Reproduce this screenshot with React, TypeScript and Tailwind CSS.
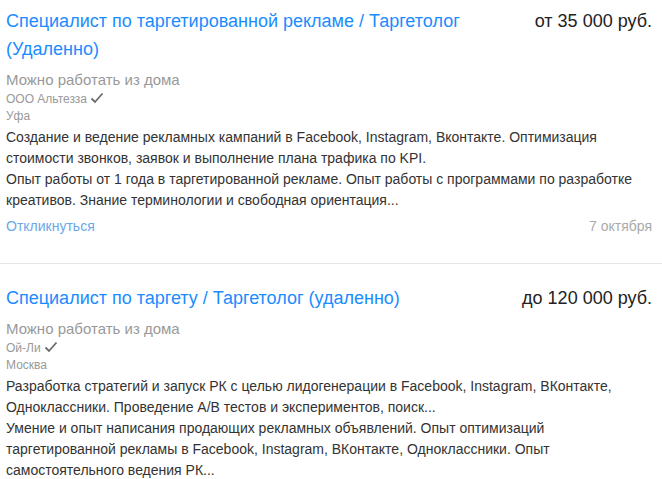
import React from "react";

function Check() {
  return (
    <svg width="14" height="12" viewBox="0 0 14 12" className="inline-block ml-[3px] align-[-1px]">
      <path d="M1.5 6.5 L5 10 L12.5 1.5" fill="none" stroke="#6b6b6b" strokeWidth="1.8" />
    </svg>
  );
}

type Vac = {
  title: string;
  salary: string;
  company: string;
  city: string;
  body: string[];
  footer?: boolean;
};

const vacs: Vac[] = [
  {
    title: "Специалист по таргетированной рекламе / Таргетолог (Удаленно)",
    salary: "от 35 000 руб.",
    company: "ООО Альтезза",
    city: "Уфа",
    body: [
      "Создание и ведение рекламных кампаний в Facebook, Instagram, Вконтакте. Оптимизация стоимости звонков, заявок и выполнение плана трафика по KPI.",
      "Опыт работы от 1 года в таргетированной рекламе. Опыт работы с программами по разработке креативов. Знание терминологии и свободная ориентация...",
    ],
    footer: true,
  },
  {
    title: "Специалист по таргету / Таргетолог (удаленно)",
    salary: "до 120 000 руб.",
    company: "Ой-Ли",
    city: "Москва",
    body: [
      "Разработка стратегий и запуск РК с целью лидогенерации в Facebook, Instagram, ВКонтакте, Одноклассники. Проведение A/B тестов и экспериментов, поиск...",
      "Умение и опыт написания продающих рекламных объявлений. Опыт оптимизаций таргетированной рекламы в Facebook, Instagram, ВКонтакте, Одноклассники. Опыт самостоятельного ведения РК...",
    ],
  },
];

function Card({ v }: { v: Vac }) {
  return (
    <div className="pl-[6px] pr-[10px]">
      <div className="flex justify-between items-start">
        <div className="text-[18px] leading-[28px] text-[#1a8cff] w-[480px]">{v.title}</div>
        <div className="text-[18px] leading-[28px] text-[#222] whitespace-nowrap">{v.salary}</div>
      </div>
      <div className="mt-[8px] text-[15px] leading-[18px] text-[#999]">Можно работать из дома</div>
      <div className="mt-[1px] text-[12px] leading-[18px] text-[#999]">
        {v.company}
        <Check />
      </div>
      <div className="text-[12px] leading-[17px] text-[#999]">{v.city}</div>
      <div className="mt-[2px] text-[14px] leading-[21px] text-[#333] w-[650px]">
        {v.body.map((b, i) => (
          <div key={i}>{b}</div>
        ))}
      </div>
      {v.footer && (
        <div className="mt-[5px] flex justify-between text-[14px] leading-[21px]">
          <span className="text-[#6aa8e8]">Откликнуться</span>
          <span className="text-[#aaa]">7 октября</span>
        </div>
      )}
    </div>
  );
}

export default function App() {
  return (
    <div className="w-[662px] h-[479px] overflow-hidden bg-white pt-[7px]" style={{ fontFamily: '"Liberation Sans", Arial, sans-serif' }}>
      <Card v={vacs[0]} />
      <div className="mt-[26px] mb-[20px] h-px bg-[#e6e6e6]" />
      <Card v={vacs[1]} />
    </div>
  );
}
